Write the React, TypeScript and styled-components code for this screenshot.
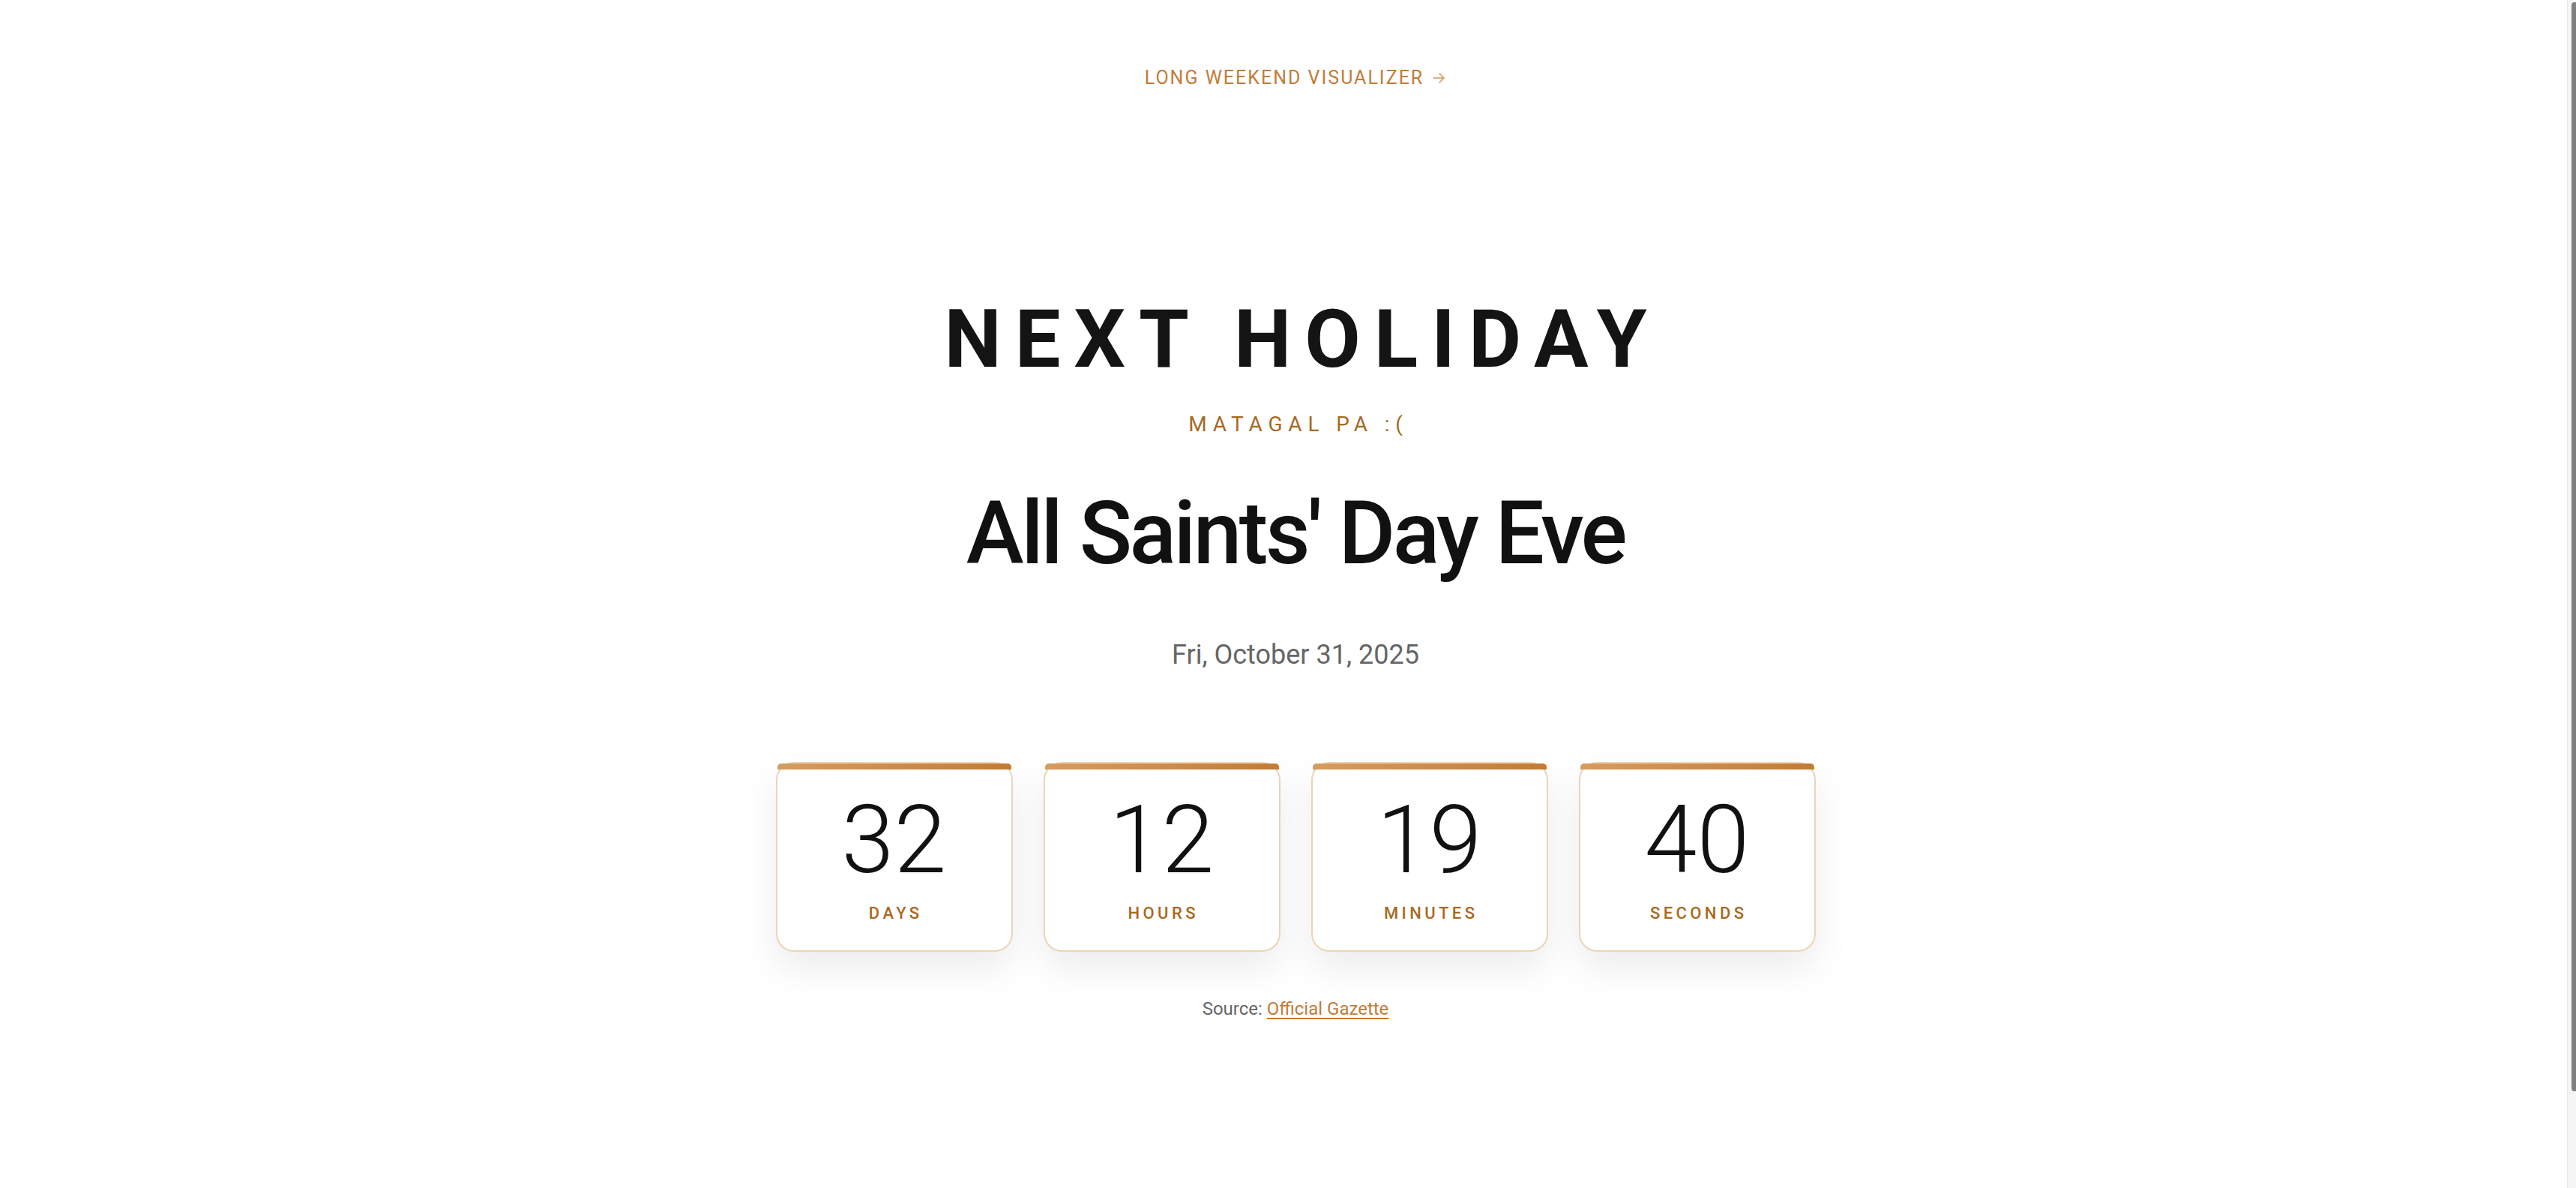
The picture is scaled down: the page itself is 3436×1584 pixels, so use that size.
import React from "react";
import styled, { createGlobalStyle } from "styled-components";

const GlobalStyle = createGlobalStyle`
  html, body {
    overflow: hidden;
  }
  body {
    margin: 0;
    background: #ffffff;
    font-family: Roboto, "Liberation Sans", Arial, sans-serif;
    color: #111111;
  }
`;

const Page = styled.div`
  display: flex;
  flex-direction: column;
  align-items: center;
  min-height: 100vh;
  padding: 89px 0 0 20px;
  box-sizing: border-box;
`;

const ScrollTrack = styled.div`
  position: fixed;
  top: 0;
  right: 0;
  bottom: 0;
  width: 12px;
  box-sizing: border-box;
  background: #f5f5f5;
  border-left: 1px solid #e8e8e8;
`;

const ScrollThumb = styled.div`
  position: absolute;
  top: 3px;
  right: 0;
  width: 6px;
  height: 1452px;
  background: #808080;
  border-radius: 4px 0 0 4px;
`;

const TopLink = styled.a`
  display: inline-flex;
  align-items: center;
  gap: 10px;
  font-size: 25px;
  line-height: 29px;
  letter-spacing: 0.08em;
  color: #c27c38;
  text-decoration: none;
  text-transform: uppercase;
`;

const ArrowIcon = styled.svg`
  width: 20px;
  height: 20px;
  color: #d49a5e;
`;

const Main = styled.main`
  display: flex;
  flex-direction: column;
  align-items: center;
  margin-top: 280px;
`;

const Heading = styled.h1`
  margin: 0;
  font-size: 108px;
  line-height: 1;
  font-weight: 700;
  letter-spacing: 0.167em;
  text-indent: 0.167em;
  color: #141414;
`;

const Subtitle = styled.p`
  margin: 46px 0 0;
  font-size: 28px;
  line-height: 1;
  font-weight: 400;
  letter-spacing: 0.28em;
  text-indent: 0.28em;
  color: #a8691f;
`;

const Title = styled.h2`
  margin: 73px 0 0;
  font-size: 116px;
  line-height: 1;
  font-weight: 500;
  letter-spacing: -0.03em;
  color: #111111;
`;

const DateText = styled.p`
  margin: 86px 0 0;
  font-size: 36px;
  line-height: 1;
  color: #666666;
`;

const Countdown = styled.div`
  display: grid;
  grid-template-columns: repeat(4, 316px);
  gap: 41px;
  margin-top: 125px;
`;

const Card = styled.div`
  position: relative;
  box-sizing: border-box;
  height: 253px;
  border: 2px solid #ecd4b6;
  border-radius: 24px;
  background: #ffffff;
  box-shadow: 0 22px 50px rgba(0, 0, 0, 0.08);
  display: flex;
  flex-direction: column;
  align-items: center;
  padding-top: 39px;

  &::before {
    content: "";
    position: absolute;
    top: 0;
    left: 0;
    right: 0;
    height: 8px;
    border-radius: 5px 5px 0 0;
    background: linear-gradient(90deg, #d69c5f 0%, #c27b37 100%);
  }
`;

const Value = styled.span`
  font-size: 126px;
  line-height: 1;
  font-weight: 300;
  color: #111111;
`;

const Label = styled.span`
  margin-top: 24px;
  font-size: 22px;
  line-height: 1;
  font-weight: 500;
  letter-spacing: 0.2em;
  text-indent: 0.2em;
  color: #a8691f;
`;

const Source = styled.p`
  margin: 64px 0 0;
  font-size: 24px;
  line-height: 1;
  color: #666666;
`;

const SourceLink = styled.a`
  color: #c27c38;
  text-decoration: underline;
  text-underline-offset: 4px;
  text-decoration-thickness: 2px;
`;

const units = [
  { value: "32", label: "DAYS" },
  { value: "12", label: "HOURS" },
  { value: "19", label: "MINUTES" },
  { value: "40", label: "SECONDS" },
];

export default function App() {
  return (
    <>
      <GlobalStyle />
      <Page>
        <TopLink href="#">
          Long Weekend Visualizer
          <ArrowIcon viewBox="0 0 20 20" fill="none" stroke="currentColor" strokeWidth="1.6" strokeLinecap="round" strokeLinejoin="round">
            <path d="M3 10h14M11 4l6 6-6 6" />
          </ArrowIcon>
        </TopLink>
        <Main>
          <Heading>NEXT HOLIDAY</Heading>
          <Subtitle>MATAGAL PA :(</Subtitle>
          <Title>All Saints' Day Eve</Title>
          <DateText>Fri, October 31, 2025</DateText>
          <Countdown>
            {units.map((u) => (
              <Card key={u.label}>
                <Value>{u.value}</Value>
                <Label>{u.label}</Label>
              </Card>
            ))}
          </Countdown>
          <Source>
            Source: <SourceLink href="#">Official Gazette</SourceLink>
          </Source>
        </Main>
      </Page>
      <ScrollTrack>
        <ScrollThumb />
      </ScrollTrack>
    </>
  );
}
